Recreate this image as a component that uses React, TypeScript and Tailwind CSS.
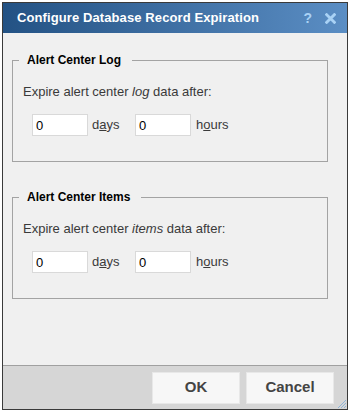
import React, { useState } from 'react';

const Section: React.FC<{ title: string; word: string }> = ({ title, word }) => {
  const [days, setDays] = useState('0');
  const [hours, setHours] = useState('0');

  return (
    <fieldset className="border border-[#a3a3a3] ml-[9px] mr-[19px] px-[10px] pt-[16px] pb-[25px] min-w-0">
      <legend className="-ml-[4px] pl-[8px] pr-[11px] text-[12px] font-bold text-black leading-[16px]">{title}</legend>
      <p className="text-[13px] text-[#3a3a3a] leading-[16px]">
        Expire alert center <i>{word}</i> data after:
      </p>
      <div className="flex items-center mt-[14px] ml-[9px] text-[13px] text-[#3a3a3a]">
        <input
          value={days}
          onChange={e => setDays(e.target.value)}
          className="w-[56px] h-[22px] px-[3px] bg-white border border-[#d9d9d9] text-[13px] text-black outline-none"
        />
        <span className="ml-[4px] w-[43px]">d<u>a</u>ys</span>
        <input
          value={hours}
          onChange={e => setHours(e.target.value)}
          className="w-[56px] h-[22px] px-[3px] bg-white border border-[#d9d9d9] text-[13px] text-black outline-none"
        />
        <span className="ml-[5px]">h<u>o</u>urs</span>
      </div>
    </fieldset>
  );
};

const App: React.FC = () => {
  return (
    <div className="w-[350px] h-[412px] bg-white p-[2px]" style={{ fontFamily: '"Liberation Sans", Arial, sans-serif' }}>
      <div className="h-full flex flex-col border border-[#3a3a3a] bg-[#f0f0f0]">
        <header className="h-[30px] flex items-center justify-between pl-[14px] pr-[11px] bg-gradient-to-r from-[#235284] to-[#5b8ec4]">
          <h1 className="text-[13px] font-bold text-white tracking-[0.1px]">Configure Database Record Expiration</h1>
          <div className="flex items-center gap-[13px] text-[#a9d2f5] font-bold text-[14px]">
            <span>?</span>
            <svg className="w-[11px] h-[11px]" viewBox="0 0 10 10">
              <path d="M1.5 1.5L8.5 8.5M8.5 1.5L1.5 8.5" stroke="currentColor" strokeWidth="2.6" strokeLinecap="square" />
            </svg>
          </div>
        </header>

        <div className="flex-1 flex flex-col pt-[19px] gap-[27px]">
          <Section title="Alert Center Log" word="log" />
          <Section title="Alert Center Items" word="items" />
        </div>

        <footer className="h-[44px] border-t border-[#a0a0a0] bg-[#d6d6d6] flex items-center justify-end gap-[6px] pr-[13px] relative">
          <button className="w-[88px] h-[32px] bg-[#f7f7f7] border border-[#e8e8e8] text-[15px] font-bold text-[#444]">OK</button>
          <button className="w-[88px] h-[32px] bg-[#f7f7f7] border border-[#e8e8e8] text-[15px] font-bold text-[#444]">Cancel</button>
          <svg className="absolute right-0 bottom-0 w-[12px] h-[12px]" viewBox="0 0 12 12">
            <path d="M11 3L3 11M11 6L6 11M11 9L9 11" stroke="#8fb4d8" strokeWidth="1" />
          </svg>
        </footer>
      </div>
    </div>
  );
};

export default App;
